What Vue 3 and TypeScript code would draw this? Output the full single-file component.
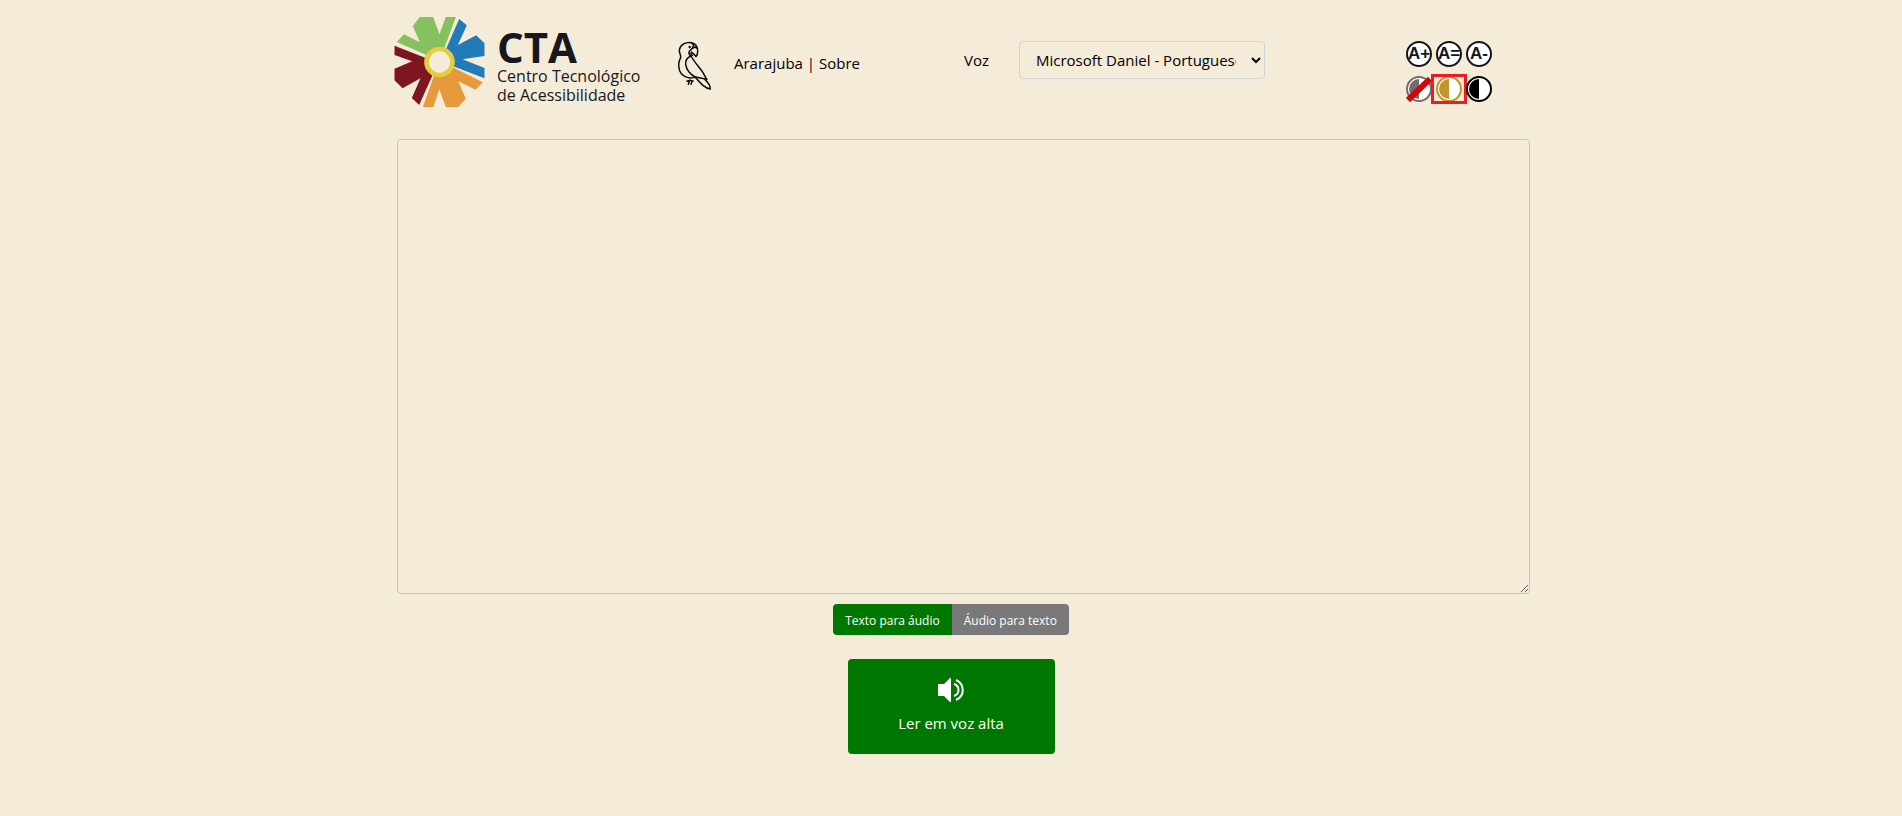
<script setup lang="ts">
import { ref } from 'vue'

const text = ref('')
const mode = ref<'speak' | 'listen'>('speak')
const voice = ref('Microsoft Daniel - Portuguese (Brazil)')
const voices: string[] = [
  'Microsoft Daniel - Portuguese (Brazil)',
  'Microsoft Maria - Portuguese (Brazil)',
]
const sizes = [
  { sign: 'A+', label: 'Aumentar fonte' },
  { sign: 'A=', label: 'Fonte normal' },
  { sign: 'A-', label: 'Diminuir fonte' },
]
const contrasts = [
  { name: 'none', color: '#776a6c', label: 'Sem contraste' },
  { name: 'sepia', color: '#c6952a', label: 'Contraste sépia' },
  { name: 'dark', color: '#000000', label: 'Alto contraste' },
]
const contrast = ref('sepia')
</script>

<template>
  <div class="page">
    <header class="header">
      <a class="logo" href="#">
        <svg class="logo-mark" viewBox="27 27 272 270" aria-hidden="true">
          <path fill="#85c15f" d="M104 27H144L163 79L182 27H212L178 119L122 140L35 102L56 79L104 103L83 54Z" />
          <path fill="#237ab8" d="M222 33L245 52L218 111L273 82L298 106V144L232 154L298 180V211L202 174L183 122Z" />
          <path fill="#7e1620" d="M28 113L124 151L142 202L102 291L80 270L106 211L52 241L28 217V182L81 160L28 141Z" />
          <path fill="#e79a3b" d="M203 178L293 223L271 245L219 220L242 272L219 297H182L162 244L145 297H113L148 199Z" />
          <circle cx="163" cy="162" r="39" fill="#f5ebd9" stroke="#e4cd3f" stroke-width="14" />
        </svg>
        <span class="logo-text">
          <strong>CTA</strong>
          <span>Centro Tecnológico</span>
          <span>de Acessibilidade</span>
        </span>
      </a>

      <nav class="nav">
        <svg class="bird" viewBox="32 30 108 150" fill="none" stroke="#0c0b09" stroke-width="4.5" stroke-linejoin="round" stroke-linecap="round" aria-hidden="true">
          <path d="M78 38C61 35 45 44 42 60C41 69 47 74 46 83C40 94 38 108 43 122C48 135 61 142 74 144C81 145 86 141 92 142" />
          <path d="M78 38C90 39 98 51 97 65C97 71 95 76 92 80C89 75 85 70 79 67" />
          <path d="M78 38L85 45L81 55L72 64C69 71 72 76 77 78C67 82 60 92 61 103C63 120 76 135 90 141L124 148" />
          <path d="M81 55L89 51L96 55M79 67C76 68 76 73 79 75L82 76" />
          <path d="M77 78C88 98 103 112 113 128L124 148M119 149C128 157 135 167 135 177C119 175 106 160 90 142" />
          <path d="M65 154L74 151L83 153M72 154L69 163M80 154L77 163" />
          <circle cx="73" cy="51" r="1.4" />
        </svg>
        <div class="links"><a href="#">Ararajuba</a> | <a href="#sobre">Sobre</a></div>
      </nav>

      <div class="voice">
        <label for="voice">Voz</label>
        <select id="voice" v-model="voice">
          <option v-for="v in voices" :key="v">{{ v }}</option>
        </select>
      </div>

      <div class="tools">
        <button v-for="s in sizes" :key="s.sign" class="tool" type="button" :aria-label="s.label">
          <svg viewBox="0 0 26 26">
            <circle cx="13" cy="13" r="12" fill="#fff" stroke="#15161a" stroke-width="2" />
            <text class="sign" x="13" y="18" text-anchor="middle">{{ s.sign }}</text>
          </svg>
        </button>
        <button
          v-for="c in contrasts"
          :key="c.name"
          class="tool"
          :class="{ selected: contrast === c.name }"
          type="button"
          :aria-label="c.label"
          @click="contrast = c.name"
        >
          <svg viewBox="0 0 26 26">
            <circle cx="13" cy="13" r="12" fill="#fff" :stroke="c.color" stroke-width="2" />
            <path d="M13 3A10 10 0 0 0 13 23Z" :fill="c.color" />
            <path v-if="c.name === 'none'" d="M2 24L24 3" stroke="#cb0909" stroke-width="6" />
          </svg>
        </button>
      </div>
    </header>

    <main class="main">
      <textarea v-model="text" class="editor" aria-label="Texto" />
      <div class="modes">
        <button type="button" :class="{ active: mode === 'speak' }" @click="mode = 'speak'">Texto para áudio</button>
        <button type="button" :class="{ active: mode === 'listen' }" @click="mode = 'listen'">Áudio para texto</button>
      </div>
      <button class="read" type="button">
        <svg viewBox="0 0 26 24" aria-hidden="true">
          <path fill="#fff" d="M0 6H6L12 0H13V24H12L6 18H0Z" />
          <path fill="none" stroke="#fff" stroke-width="2" d="M16 6C22 8 22 16 16 18M18 2C27 6 27 18 18 22" />
        </svg>
        <span>Ler em voz alta</span>
      </button>
    </main>
  </div>
</template>

<style>
body {
  background: #f5ebd9;
}
</style>

<style scoped>
.page {
  box-sizing: border-box;
  max-width: 1140px;
  margin: 0 auto;
  font: 15px/24px "Segoe UI", "Open Sans", "Noto Sans", sans-serif;
  color: #000;
}
.page * {
  box-sizing: border-box;
}
.page a {
  color: inherit;
  text-decoration: none;
}
button {
  border: 0;
  padding: 0;
  font: inherit;
  cursor: pointer;
}
svg {
  display: block;
}
.header {
  display: grid;
  grid-template-columns: 282px 288px 1fr 88px;
  align-items: start;
  padding: 17px 27px 0 13px;
}
.logo {
  display: flex;
  gap: 12px;
}
.logo-mark {
  width: 91px;
  height: 90px;
}
.logo-text {
  display: flex;
  flex-direction: column;
  padding-top: 10px;
  font: 16px/19px "Open Sans", sans-serif;
  color: #18181c;
  white-space: nowrap;
}
.logo-text strong {
  font-size: 42px;
  line-height: 40px;
}
.nav {
  display: flex;
  align-items: center;
  gap: 22px;
  padding-top: 23px;
}
.bird {
  width: 36px;
  height: 50px;
}
.links {
  padding-bottom: 4px;
  white-space: nowrap;
}
.voice {
  display: flex;
  align-items: center;
  gap: 30px;
  padding-top: 24px;
}
.voice select {
  width: 246px;
  height: 38px;
  padding: 6px 12px;
  border: 1px solid #ced4da;
  border-radius: 4px;
  background: transparent;
  color: #000;
  font: inherit;
}
.tools {
  display: grid;
  grid-template-columns: repeat(3, 26px);
  gap: 9px 4px;
  padding-top: 24px;
}
.tool {
  position: relative;
  background: transparent;
}
.tool svg {
  width: 26px;
  height: 26px;
}
.sign {
  font: bold 17px "Liberation Sans", Arial, sans-serif;
  fill: #15161a;
}
.selected::after {
  content: "";
  position: absolute;
  inset: -2px -5px;
  border: 3px solid #ed1c24;
}
.main {
  display: flex;
  flex-direction: column;
  align-items: center;
}
.editor {
  align-self: flex-start;
  flex-shrink: 0;
  width: calc(100% - 7px);
  height: 455px;
  margin: 32px 0 10px 16px;
  padding: 6px 12px;
  border: 1px solid #a9d5ae;
  border-radius: 4px;
  background: transparent;
  font: inherit;
}
.modes {
  display: flex;
  margin-bottom: 24px;
  border-radius: 4px;
  overflow: hidden;
}
.modes button {
  padding: 6px 12px 4px;
  background: #797979;
  color: #fff;
  font-size: 12px;
  line-height: 21px;
}
.modes .active {
  background: #007800;
}
.read {
  display: flex;
  flex-direction: column;
  align-items: center;
  gap: 9px;
  width: 207px;
  padding: 19px 12px;
  border-radius: 4px;
  background: #007800;
  color: #fff;
}
.read svg {
  width: 26px;
  height: 24px;
}
</style>
